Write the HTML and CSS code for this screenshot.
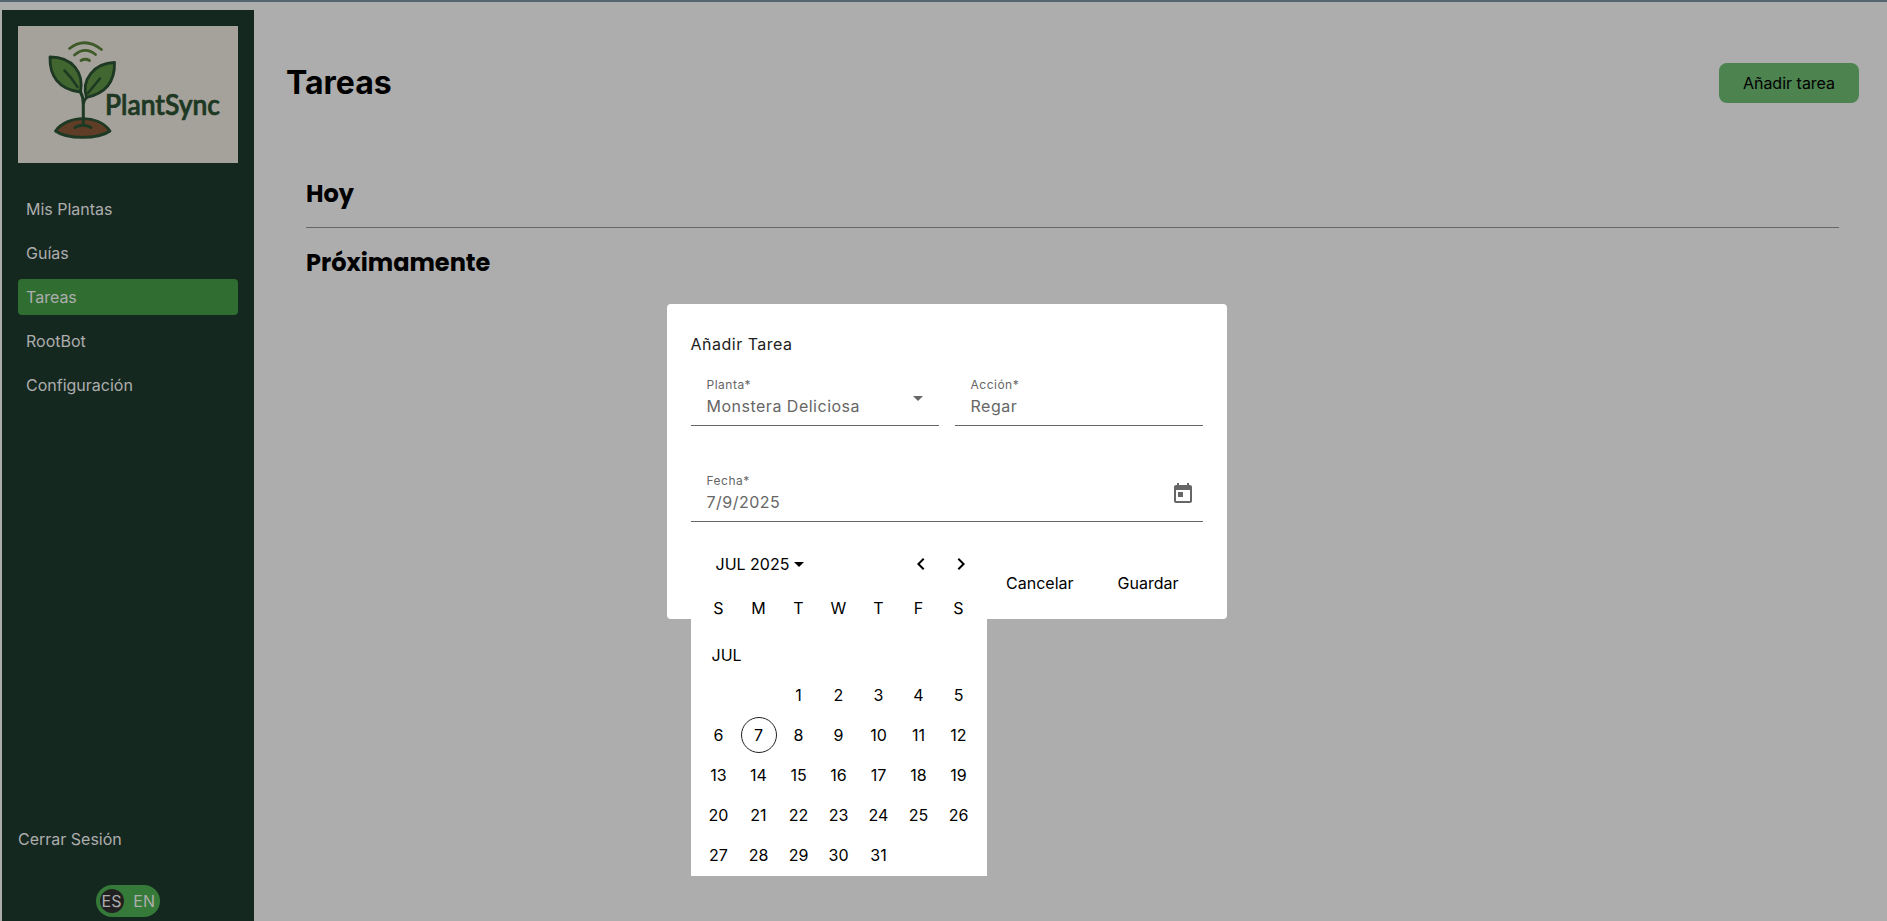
FILE: index.html
```
<!DOCTYPE html>
<html lang="es">
<head>
<meta charset="utf-8">
<title>PlantSync</title>
<link rel="stylesheet" href="styles.css">
</head>
<body>
<div class="app">
  <aside class="sidebar">
    <svg class="logo" viewBox="0 0 220 137" width="220" height="137" fill="none" stroke="#1d3823" stroke-linecap="round" stroke-linejoin="round">
      <rect width="220" height="137" fill="#a5a29b" stroke="none"/>
      <g stroke="#3e5a28" stroke-width="2.800">
        <path d="M51.500 22.500Q67 10.500 83.500 23.500M56.500 29Q67 20 77.500 28.500M63 34.500Q67.500 32 71.500 34.500"/>
      </g>
      <path d="M32 31C31.500 49 40 63.500 62.500 66C66 47 55 31 32 31Z" fill="#41662f" stroke-width="2.800"/>
      <path d="M96.500 36.500C97 55 89 67 68.500 71.500C63 54 76 37 96.500 36.500Z" fill="#41662f" stroke-width="2.800"/>
      <path d="M46.500 44.500Q54 52 59.500 61M82 52.500L70 67" stroke-width="2.500"/>
      <path d="M37.500 105C49 89 80 88 92 105C80 113.500 49 113.500 37.500 105Z" fill="#5f3d27" stroke-width="2.800"/>
      <path d="M62.500 66Q65.300 71 65.300 78V98M68.500 71.500Q66 74 65.300 78M57 101.500Q65 97 73 101.500" stroke-width="3"/>
      <text class="logo-text" x="87" y="88.500" textLength="115" lengthAdjust="spacingAndGlyphs" fill="#1d3823" stroke="#1d3823" stroke-width=".7">PlantSync</text>
    </svg>
    <nav class="nav">
      <a class="nav-item">Mis Plantas</a>
      <a class="nav-item">Guías</a>
      <a class="nav-item active">Tareas</a>
      <a class="nav-item">RootBot</a>
      <a class="nav-item">Configuración</a>
    </nav>
    <div class="sidebar-foot">
      <a class="logout">Cerrar Sesión</a>
      <div class="lang"><span class="lang-on">ES</span><span class="lang-off">EN</span></div>
    </div>
  </aside>
  <main class="main">
    <header class="head"><h1>Tareas</h1><button class="add">Añadir tarea</button></header>
    <section class="tasks">
      <h2 class="today">Hoy</h2>
      <hr>
      <h2 class="soon">Próximamente</h2>
    </section>
  </main>
</div>
<div class="dialog">
  <div class="dialog-title">Añadir Tarea</div>
  <div class="row">
    <div class="field"><div><label>Planta*</label><p>Monstera Deliciosa</p></div>
      <svg class="caret" width="10" height="5" viewBox="0 0 10 5"><path d="M0 0h10L5 5z" fill="#666"/></svg></div>
    <div class="field"><div><label>Acción*</label><p>Regar</p></div></div>
  </div>
  <div class="field"><div><label>Fecha*</label><p>7/9/2025</p></div>
    <svg class="cal-icon" width="24" height="24" viewBox="0 0 24 24" fill="#666"><path d="M19 3h-1V1h-2v2H8V1H6v2H5c-1.110 0-1.990.900-1.990 2L3 19c0 1.100.890 2 2 2h14c1.100 0 2-.900 2-2V5c0-1.100-.900-2-2-2zm0 16H5V8h14v11zM7 10h5v5H7z"/></svg></div>
  <div class="actions"><button class="btn">Cancelar</button><button class="btn">Guardar</button></div>
  <div class="calendar">
    <div class="cal-head"><span>JUL 2025</span><svg class="period" width="10" height="5" viewBox="0 0 10 5"><path d="M0 0h10L5 5z"/></svg>
      <svg class="arrow prev" width="24" height="24" viewBox="0 0 24 24"><path d="M15.410 7.410 14 6l-6 6 6 6 1.410-1.410L10.830 12z"/></svg>
      <svg class="arrow" width="24" height="24" viewBox="0 0 24 24"><path d="M10 6 8.590 7.410 13.170 12l-4.580 4.590L10 18l6-6z"/></svg></div>
    <div class="grid week"><span>S</span><span>M</span><span>T</span><span>W</span><span>T</span><span>F</span><span>S</span></div>
    <div class="month">JUL</div>
    <div class="grid days">
      <span></span><span></span><span>1</span><span>2</span><span>3</span><span>4</span><span>5</span>
      <span>6</span><span class="now">7</span><span>8</span><span>9</span><span>10</span><span>11</span><span>12</span>
      <span>13</span><span>14</span><span>15</span><span>16</span><span>17</span><span>18</span><span>19</span>
      <span>20</span><span>21</span><span>22</span><span>23</span><span>24</span><span>25</span><span>26</span>
      <span>27</span><span>28</span><span>29</span><span>30</span><span>31</span>
    </div>
  </div>
</div>
</body>
</html>
```
FILE: styles.css
```
* { box-sizing: border-box; margin: 0; }
body {
  height: 921px;
  overflow: hidden;
  background: #adadad;
  font: 16px/24px Inter, sans-serif;
  color: #000;
}
button { font: inherit; border: 0; padding: 0; background: none; color: #000; }
.app {
  display: flex;
  height: 921px;
  padding: 8px 0 0 2px;
  border-top: 2px solid #53656f;
}
.sidebar {
  width: 252px;
  padding: 16px 16px 4px;
  display: flex;
  flex-direction: column;
  background: #152820;
  color: #adadad;
}
.logo { display: block; flex: none; }
.logo-text { font: 600 28px Lato, sans-serif; }
.nav { display: flex; flex-direction: column; gap: 8px; margin-top: 28px; }
.nav-item { height: 36px; padding: 0 8px; line-height: 36px; border-radius: 4px; }
.active { background: #306d31; }
.sidebar-foot { margin-top: auto; display: flex; flex-direction: column; gap: 34px; }
.lang {
  align-self: center;
  display: flex;
  align-items: center;
  justify-content: space-between;
  width: 64px;
  height: 32px;
  padding: 0 5px 0 4px;
  border-radius: 16px;
  background: #357a38;
}
.lang-on { width: 24px; height: 24px; border-radius: 50%; background: #212121; text-align: center; text-indent: -1px; }
.main { flex: 1; padding: 53px 28px 0 33px; }
.head { display: flex; justify-content: space-between; align-items: center; height: 40px; }
h1 { font: 700 32px/40px Inter, sans-serif; margin-left: -1px; }
.add { width: 140px; height: 40px; border-radius: 8px; background: #4c834f; }
.tasks { padding: 73px 20px 0 19px; }
h2 { font: 700 24px/36px Poppins, Inter, sans-serif; font-feature-settings: "cv11"; }
hr { border: 0; height: 1px; background: #666; margin: 15px 0 17px; }
.dialog {
  position: absolute;
  left: 666.5px;
  top: 304px;
  width: 560px;
  height: 315px;
  padding: 28px 24px;
  border-radius: 4px;
  background: #fff;
}
.dialog-title { letter-spacing: .5px; color: #212121; }
.row { display: flex; gap: 16px; margin: 14px 0 40px; }
.field {
  flex: 1;
  height: 56px;
  padding: 6px 16px 0;
  display: flex;
  justify-content: space-between;
  border-bottom: 1px solid #666;
  color: #666;
}
.field label { display: block; font-size: 12px; line-height: 18px; letter-spacing: .5px; }
.field p { letter-spacing: .5px; }
.caret { margin-top: 20px; }
.cal-icon { margin: 10px -8px 0 0; }
.actions { display: flex; justify-content: flex-end; gap: 44px; padding: 49px 24px 0; }
.calendar {
  position: absolute;
  left: 24px;
  top: 218px;
  width: 296px;
  height: 354px;
  padding: 24px 8px 0;
  background: #fff;
}
.cal-head { display: flex; align-items: center; height: 36px; padding: 0 6px 0 17px; }
.period { margin-left: 5px; }
.prev { margin-left: auto; margin-right: 16px; }
.grid { display: grid; grid-template-columns: repeat(7, 40px); text-align: center; }
.week { line-height: 40px; margin-top: 6px; }
.month { line-height: 40px; padding-left: 13px; margin-top: 7px; }
.days { grid-auto-rows: 40px; line-height: 40px; }
.now { width: 36px; height: 36px; margin: 2px; line-height: 34px; border: 1px solid #222; border-radius: 50%; }
```
